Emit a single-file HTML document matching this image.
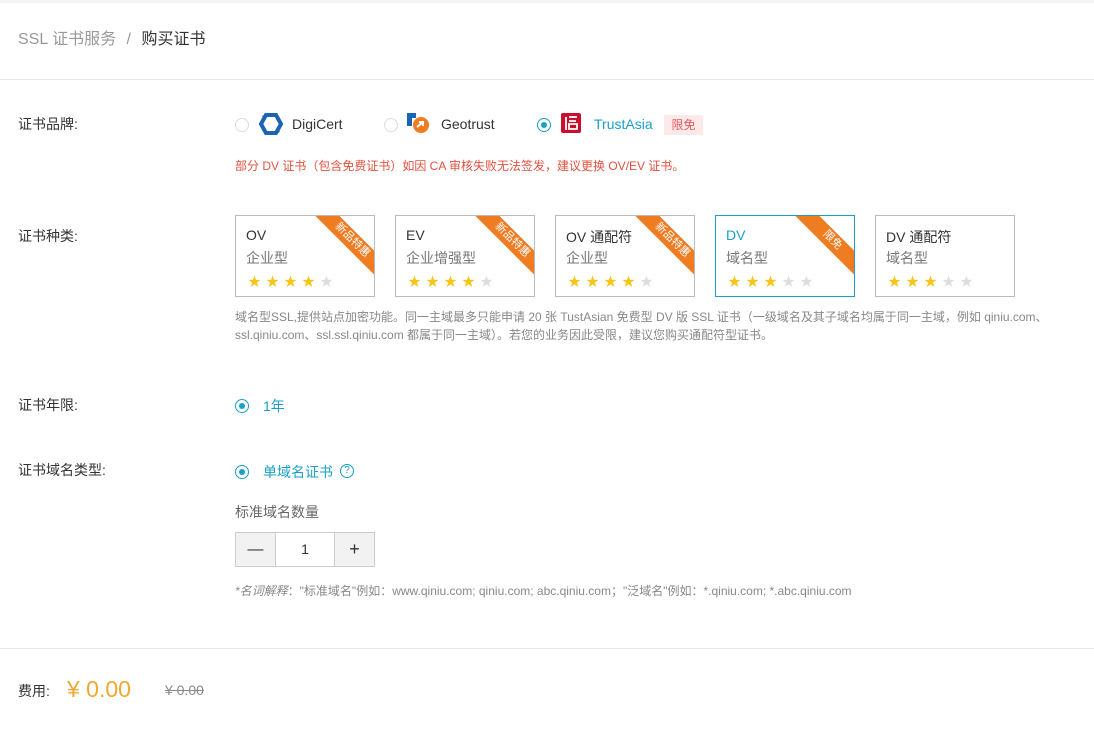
<!DOCTYPE html>
<html><head><meta charset="utf-8"><style>
*{box-sizing:border-box;margin:0;padding:0}
body{width:1094px;height:734px;background:#fff;font-family:"Liberation Sans","Noto Sans CJK SC",sans-serif;color:#333;position:relative;overflow:hidden}
.abs{position:absolute}
.lbl{position:absolute;left:18px;font-size:14px;color:#333}
.radio{position:absolute;width:14px;height:14px;border:1px solid #ddd;border-radius:50%;background:#fff}
.radio.on{border-color:#1aa0c8}
.radio.on::after{content:"";position:absolute;left:3px;top:3px;width:6px;height:6px;border-radius:50%;background:#1aa0c8}
.card{position:absolute;top:215px;width:140px;height:82px;border:1px solid #bbb;overflow:hidden;background:#fff}
.card .t{position:absolute;left:10px;top:11px;font-size:14px;color:#333}
.card .s{position:absolute;left:10px;top:32px;font-size:14px;color:#777}
.card .st{position:absolute;left:12px;top:55px;font-size:13px;letter-spacing:5px;color:#f5c518}
.card .st i{font-style:normal;color:#ddd}
.rib{position:absolute;right:-28px;top:16px;width:100px;height:17px;background:#f07c22;color:#fff;font-size:11px;line-height:17px;text-align:center;transform:rotate(45deg)}
</style></head><body>
<div class="abs" style="left:0;top:0;width:1094px;height:3px;background:#f4f4f4"></div>
<div class="abs" style="left:18px;top:25px;font-size:16px;color:#999">SSL 证书服务 <span style="margin:0 6px">/</span> <span style="color:#333">购买证书</span></div>
<div class="abs" style="left:0;top:79px;width:1094px;height:1px;background:#e6e6e6"></div>

<div class="lbl" style="top:114px">证书品牌:</div>
<div class="radio" style="left:235px;top:118px"></div>
<svg class="abs" style="left:258px;top:112px" width="26" height="24" viewBox="0 0 26 24"><path d="M8 3 L18 3 L23 12 L18 21 L8 21 L3 12 Z" fill="none" stroke="#1a64b4" stroke-width="4"/><path d="M4 4 L9 2 L7 8Z M22 20 L17 22 L19 16Z" fill="#1a64b4"/></svg>
<div class="abs" style="left:292px;top:116px;font-size:14px;color:#333">DigiCert</div>
<div class="radio" style="left:384px;top:118px"></div>
<svg class="abs" style="left:405px;top:111px" width="26" height="24" viewBox="0 0 26 24"><path d="M2 2h9v5h-4v8H2z" fill="#1a64b4"/><circle cx="16" cy="14" r="8" fill="#f07c22"/><path d="M12 16 L18 11 M14 11h4v4" stroke="#fff" stroke-width="2" fill="none"/></svg>
<div class="abs" style="left:441px;top:116px;font-size:14px;color:#333">Geotrust</div>
<div class="radio on" style="left:537px;top:118px"></div>
<svg class="abs" style="left:561px;top:113px" width="20" height="20" viewBox="0 0 20 20"><rect width="20" height="20" rx="2" fill="#c8102e"/><path d="M5 4v13 M8 4h8 M8 8h7 M8 11h8v5h-8z" stroke="#fff" stroke-width="1.8" fill="none"/></svg>
<div class="abs" style="left:594px;top:116px;font-size:14px;color:#1aa0c8">TrustAsia</div>
<div class="abs" style="left:664px;top:115px;width:39px;height:20px;background:#fde9e9;color:#e25b5b;font-size:12px;line-height:20px;text-align:center">限免</div>
<div class="abs" style="left:235px;top:157px;font-size:12px;color:#e0523e">部分 DV 证书（包含免费证书）如因 CA 审核失败无法签发，建议更换 OV/EV 证书。</div>

<div class="lbl" style="top:226px">证书种类:</div>
<div class="card" style="left:235px"><div class="t">OV</div><div class="s">企业型</div><div class="st">★★★★<i>★</i></div><div class="rib">新品特惠</div></div>
<div class="card" style="left:395px"><div class="t">EV</div><div class="s">企业增强型</div><div class="st">★★★★<i>★</i></div><div class="rib">新品特惠</div></div>
<div class="card" style="left:555px"><div class="t">OV 通配符</div><div class="s">企业型</div><div class="st">★★★★<i>★</i></div><div class="rib">新品特惠</div></div>
<div class="card" style="left:715px;border-color:#1aa0c8"><div class="t" style="color:#1aa0c8">DV</div><div class="s">域名型</div><div class="st">★★★<i>★★</i></div><div class="rib">限免</div></div>
<div class="card" style="left:875px"><div class="t">DV 通配符</div><div class="s">域名型</div><div class="st">★★★<i>★★</i></div></div>
<div class="abs" style="left:235px;top:308px;width:830px;font-size:12px;color:#888;line-height:18px">域名型SSL,提供站点加密功能。同一主域最多只能申请 20 张 TustAsian 免费型 DV 版 SSL 证书（一级域名及其子域名均属于同一主域，例如 qiniu.com、ssl.qiniu.com、ssl.ssl.qiniu.com 都属于同一主域）。若您的业务因此受限，建议您购买通配符型证书。</div>

<div class="lbl" style="top:395px">证书年限:</div>
<div class="radio on" style="left:235px;top:399px"></div>
<div class="abs" style="left:263px;top:396px;font-size:14px;color:#1aa0c8">1年</div>

<div class="lbl" style="top:460px">证书域名类型:</div>
<div class="radio on" style="left:235px;top:465px"></div>
<div class="abs" style="left:263px;top:462px;font-size:14px;color:#1aa0c8">单域名证书</div>
<div class="abs" style="left:340px;top:464px;width:14px;height:14px;border:1px solid #1aa0c8;border-radius:50%;color:#1aa0c8;font-size:10px;line-height:12px;text-align:center">?</div>
<div class="abs" style="left:235px;top:502px;font-size:14px;color:#666">标准域名数量</div>
<div class="abs" style="left:235px;top:532px;width:140px;height:35px;border:1px solid #ccc;display:flex">
<div style="width:40px;background:#f2f2f2;border-right:1px solid #ccc;text-align:center;line-height:33px;font-size:16px">—</div>
<div style="flex:1;text-align:center;line-height:33px;font-size:14px">1</div>
<div style="width:40px;background:#f2f2f2;border-left:1px solid #ccc;text-align:center;line-height:33px;font-size:18px">+</div></div>
<div class="abs" style="left:235px;top:582px;font-size:12px;color:#888"><i>*名词解释</i>："标准域名"例如：www.qiniu.com; qiniu.com; abc.qiniu.com；"泛域名"例如：*.qiniu.com; *.abc.qiniu.com</div>

<div class="abs" style="left:0;top:648px;width:1094px;height:1px;background:#e6e6e6"></div>
<div class="lbl" style="top:681px">费用:</div>
<div class="abs" style="left:67px;top:676px;font-size:23px;color:#f0a830">¥ 0.00</div>
<div class="abs" style="left:165px;top:682px;font-size:14px;color:#888;text-decoration:line-through">¥ 0.00</div>
</body></html>
